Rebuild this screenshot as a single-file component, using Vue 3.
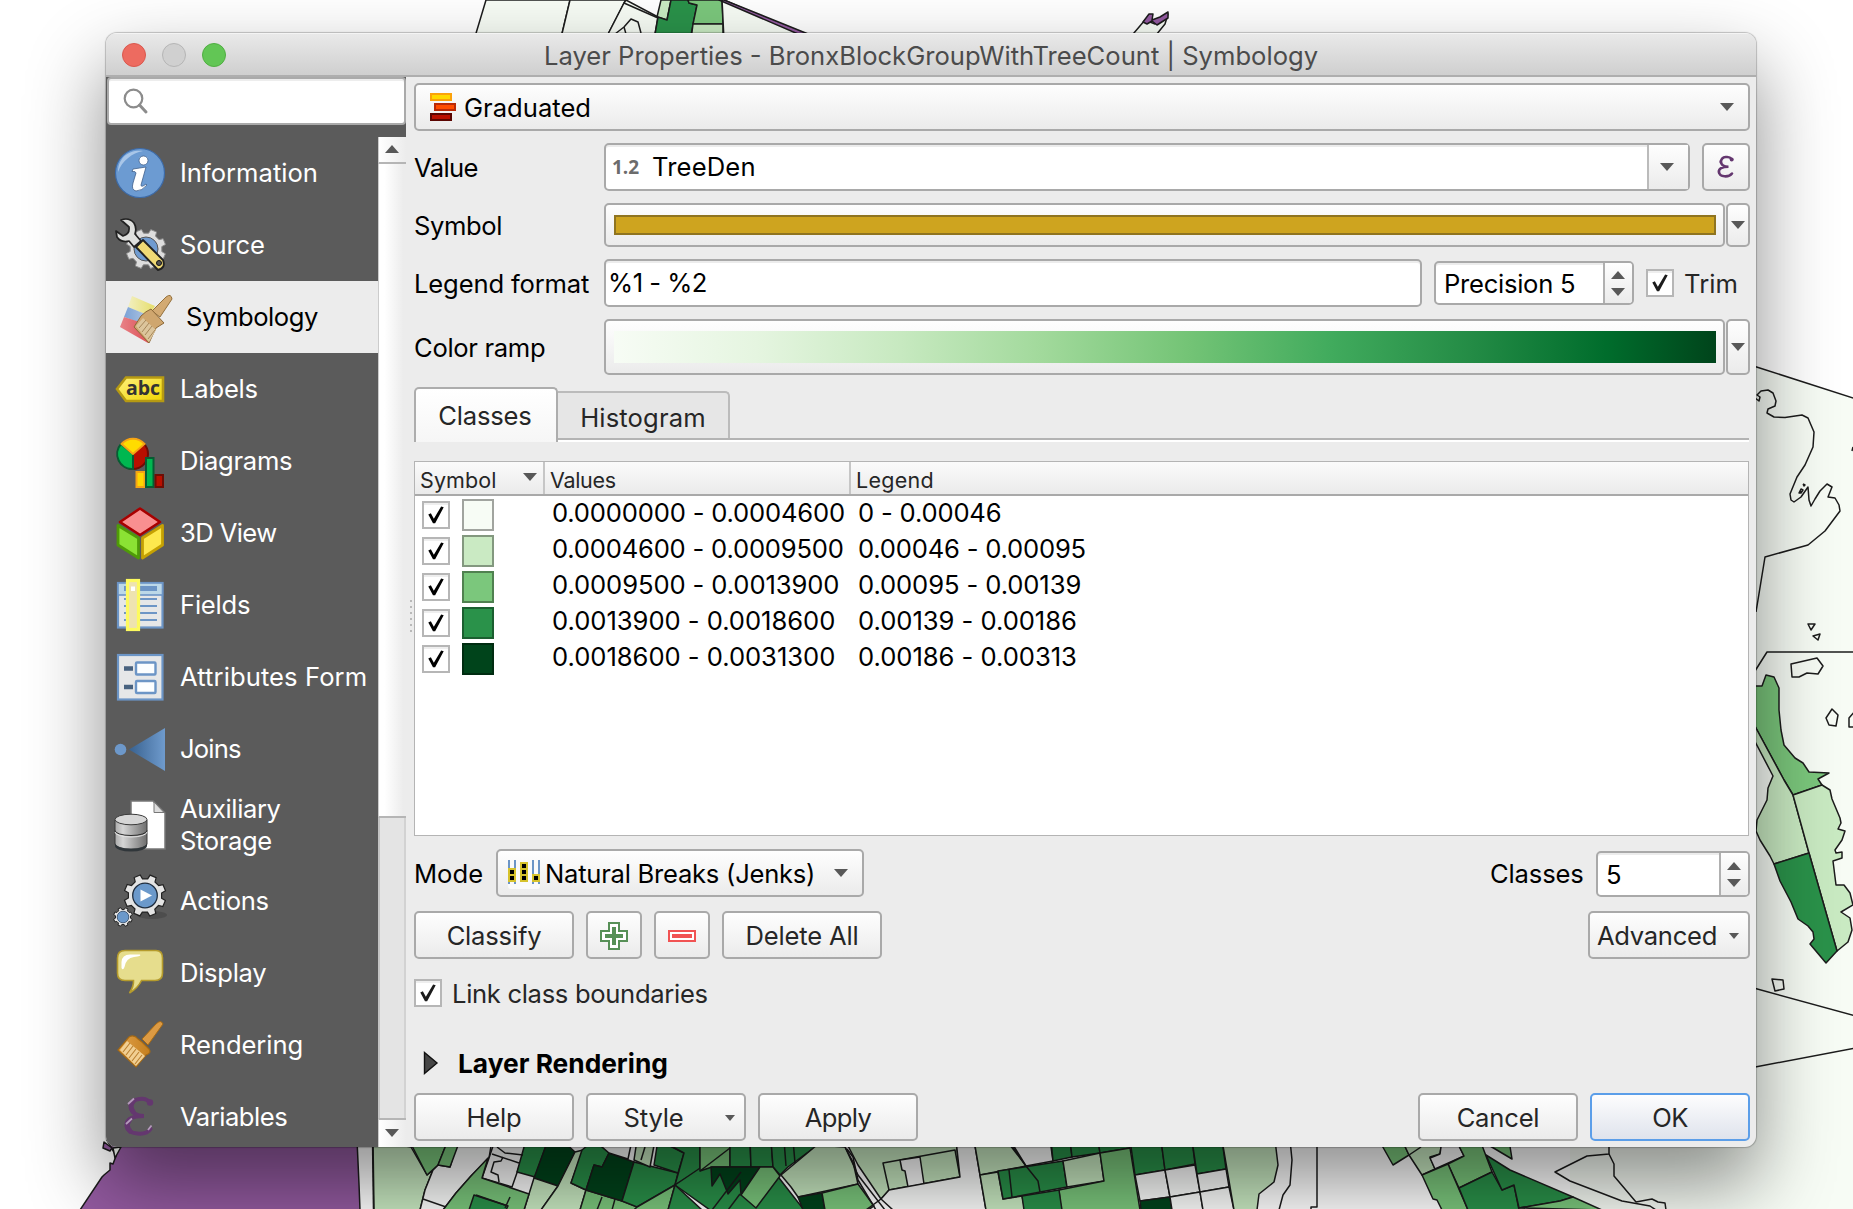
<script setup>
const nav = [
  { label: 'Information', icon: 'info', ls: 0 },
  { label: 'Source', icon: 'source', ls: -0.15 },
  { label: 'Symbology', icon: 'symbology', ls: -0.44, active: true },
  { label: 'Labels', icon: 'labels', ls: -0.21 },
  { label: 'Diagrams', icon: 'diagrams', ls: -0.31 },
  { label: '3D View', icon: 'view3d', ls: -0.6 },
  { label: 'Fields', icon: 'fields', ls: -0.22 },
  { label: 'Attributes Form', icon: 'form', ls: 0.08 },
  { label: 'Joins', icon: 'joins', ls: -0.8 },
  { label: 'Auxiliary Storage', icon: 'aux', ls: -0.4, tall: true },
  { label: 'Actions', icon: 'actions', ls: -0.3 },
  { label: 'Display', icon: 'display', ls: -0.29 },
  { label: 'Rendering', icon: 'rendering', ls: -0.08 },
  { label: 'Variables', icon: 'variables', ls: -0.5 },
]

const rows = [
  { color: '#f7fcf5', values: '0.0000000 - 0.0004600', legend: '0 - 0.00046', ls: -0.18 },
  { color: '#caeac3', values: '0.0004600 - 0.0009500', legend: '0.00046 - 0.00095', ls: -0.2 },
  { color: '#7bc77c', values: '0.0009500 - 0.0013900', legend: '0.00095 - 0.00139', ls: -0.1 },
  { color: '#2a924a', values: '0.0013900 - 0.0018600', legend: '0.00139 - 0.00186', ls: -0.03 },
  { color: '#00441b', values: '0.0018600 - 0.0031300', legend: '0.00186 - 0.00313', ls: -0.03 },
]

const P = '#f7fcf5', L = '#c9eac2', M = '#7bc77c', D = '#2a924a', X = '#00441b', V = '#935aa0', W = '#fcfdfc'

// Map features: [fill, points]
const areas = [
  [P, '486,0 474,40 560.500,40 570,0'],
  [P, '570,0 560.500,40 605,40 624,3 626,0'],
  [P, '626,0 624,3 605,40 654,40 658,17'],
  [L, '661,0 657,17 667,20 671,0'],
  [D, '671,0 667,20 658,17 654,40 690,40 697,5 689,3 688,0'],
  [M, '688,0 689,3 697,5 693,24 723,24 722,0'],
  [L, '693,24 723,24 723,40 691,40'],
  [P, '722,-1 724,40 815,40'],
  [V, '719,0 724,0 823,40 812,40'],
  [P, '1128,40 1145,20 1155,24 1168,14 1165,24 1152,40'],
  [V, '1143,22 1149,14 1153,14 1152,20 1160,17 1168,12 1168,18 1157,25 1152,21 1147,24'],
  [P, '1755,366 1856,399 1856,1215 1570,1215 1570,1140 1755,1080', 'none'],
  [M, '1750,686 1762,686 1766,675 1774,677 1779,688 1779,710 1781,730 1784,745 1795,758 1803,763 1809,772 1829,773 1818,779 1822,785 1793,795 1784,780 1750,717'],
  [L, '1750,717 1784,780 1793,795 1809,853 1774,864 1770,856 1760,840 1756,831 1757,820 1767,800 1768,788 1773,776 1750,732'],
  [L, '1793,795 1822,785 1830,790 1832,799 1840,818 1841,823 1838,829 1845,831 1842,840 1835,850 1836,853 1842,852 1842,858 1833,861 1836,885 1844,885 1850,893 1853,905 1841,912 1850,918 1852,930 1848,942 1837,951 1809,853'],
  [D, '1774,864 1809,853 1837,951 1826,963 1810,944 1814,939 1813,932 1808,926 1798,919 1791,902 1780,881'],
  [P, '1772,979 1783,980 1784,989 1775,991'],
  [P, '1808,624 1815,624 1811,630'],
  [P, '1813,636 1820,634 1818,640'],
  [P, '1791,664 1817,658 1823,666 1818,674 1807,673 1799,677 1792,677'],
  [P, '1826,718 1832,709 1838,715 1836,726 1829,725'],
  [P, '1856,710 1849,718 1849,727 1856,727'],
  [V, '107,1140 116,1156 113,1164 110,1163 110,1170 104,1175 102,1177 80,1210 360,1210 359,1184 357,1140'],
  [P, '113,1148 121,1147 115,1158'],
  [V, '104,1142 112,1148 110,1151 103,1148'],
  [L, '373,1140 411,1147 427,1175 433,1170 425,1190 420,1210 374,1210'],
  [W, '458,1140 492,1140 489,1158 471,1176 456,1193 443,1210 420,1210 425,1190 433,1170 438,1165 450,1167'],
  [M, '409,1140 427,1175 438,1165 448,1140'],
  [M, '448,1140 438,1165 450,1167 460,1140'],
  [W, '495,1140 489,1158 482,1178 512,1187 526,1147'],
  [D, '526,1140 517,1172 535,1177 548,1140'],
  [X, '548,1140 534,1178 558,1186 575,1152 562,1140'],
  [L, '534,1178 524,1210 541,1210 558,1186'],
  [M, '488,1158 482,1178 529,1194 524,1210 443,1210 456,1193 471,1176'],
  [D, '474,1195 508,1206 506,1210 469,1210'],
  [L, '541,1210 558,1186 575,1152 583,1150 571,1183 586,1190 580,1210'],
  [D, '594,1140 582,1150 571,1183 586,1190 594,1165 602,1167 609,1153'],
  [M, '586,1190 622,1201 638,1207 634,1210 580,1210'],
  [X, '609,1153 634,1162 622,1201 586,1190 594,1165 602,1167'],
  [D, '634,1162 678,1173 675,1185 637,1207 622,1201'],
  [W, '594,1140 632,1140 628,1159 609,1153'],
  [L, '637,1140 655,1140 650,1167 634,1160'],
  [D, '658,1140 684,1153 678,1173 654,1165'],
  [D, '660,1140 700,1140 700,1170 675,1185 684,1153'],
  [D, '675,1185 712,1160 765,1160 804,1210 710,1210'],
  [M, '675,1185 637,1207 634,1210 668,1210'],
  [D, '675,1185 668,1210 702,1210'],
  [M, '700,1140 730,1140 730,1167 712,1167 700,1171'],
  [D, '730,1140 750,1140 751,1167 730,1167'],
  [D, '750,1140 771,1140 773,1167 751,1167'],
  [D, '771,1140 818,1140 815,1147 788,1167 780,1175 773,1167'],
  [X, '711,1167 760,1167 741,1195 740,1180 728,1194 720,1174 712,1186'],
  [M, '760,1167 773,1167 780,1176 756,1208 741,1195'],
  [L, '817,1145 845,1147 853,1162 858,1184 798,1197 791,1187 781,1175'],
  [X, '798,1197 822,1193 825,1210 803,1210'],
  [M, '822,1193 858,1184 874,1206 868,1210 825,1210'],
  [L, '845,1140 956,1140 960,1177 889,1190 881,1199 858,1165'],
  [L, '883,1163 955,1150 960,1177 889,1190'],
  [W, '900,1160 920,1157 924,1184 908,1187 905,1171 902,1170'],
  [W, '956,1140 974,1140 986,1210 893,1210 881,1199 889,1190 960,1177'],
  [L, '974,1140 1008,1140 1026,1166 980,1175'],
  [W, '1010,1140 1050,1140 1053,1161 1026,1166'],
  [L, '980,1175 998,1172 1003,1199 1022,1196 1025,1210 986,1210'],
  [D, '998,1171 1063,1161 1067,1187 1003,1199'],
  [D, '1051,1140 1070,1140 1072,1157 1053,1161'],
  [D, '1070,1140 1098,1140 1100,1153 1072,1157'],
  [D, '1098,1140 1130,1140 1130,1148 1100,1153'],
  [L, '1063,1161 1100,1153 1104,1181 1067,1187'],
  [M, '1100,1153 1130,1148 1140,1210 1061,1210 1059,1190 1104,1181'],
  [D, '1022,1196 1059,1190 1062,1210 1024,1210'],
  [D, '1130,1140 1161,1140 1165,1170 1135,1175'],
  [D, '1161,1140 1192,1140 1195,1164 1165,1170'],
  [D, '1192,1140 1222,1140 1226,1169 1197,1174'],
  [W, '1135,1175 1165,1170 1170,1197 1140,1201'],
  [W, '1165,1170 1195,1165 1200,1192 1170,1197'],
  [W, '1197,1174 1226,1169 1229,1187 1200,1192'],
  [X, '1140,1201 1170,1197 1172,1210 1141,1210'],
  [W, '1170,1197 1200,1192 1203,1210 1172,1210'],
  [W, '1200,1192 1229,1187 1234,1210 1203,1210'],
  [L, '1222,1140 1275,1140 1278,1165 1274,1182 1259,1194 1257,1210 1234,1210'],
  [M, '1380,1142 1393,1165 1409,1155 1402,1140'],
  [L, '1402,1140 1409,1155 1422,1175 1435,1169 1430,1157 1440,1154 1442,1140'],
  [W, '1442,1140 1440,1154 1430,1158 1435,1169 1464,1156 1456,1140'],
  [M, '1456,1140 1480,1140 1492,1172 1459,1188 1448,1164 1464,1156'],
  [M, '1422,1175 1448,1164 1468,1210 1442,1210 1437,1200 1433,1199'],
  [D, '1459,1188 1492,1172 1502,1190 1514,1185 1519,1210 1468,1210'],
  [D, '1486,1155 1510,1170 1573,1197 1560,1201 1519,1208 1514,1185 1502,1190'],
  [M, '1519,1208 1560,1201 1573,1197 1602,1210'],
  [M, '1480,1140 1512,1159 1509,1140'],
]

// Open line work on top of the areas
const lines = [
  '1755,366.500 1856,399',
  '615,34 624,27 631,19 638,22 641,33', '624,27 626,34', '624,3 658,18',
  '1755,398 1759,401 1760,397 1757,395 1761,391 1768,390 1773,393 1776,401 1775,406 1768,409 1767,413 1774,417 1785,417.5 1802,415 1808,418 1814,432 1813,447 1805,465 1797,477 1790,494 1791,500 1794,502 1801,497 1808,487 1809,500 1811,506 1815,499 1820,491 1827,484 1832,487 1828,497 1835,498 1839,505 1840,511 1825,531 1808,545 1765,557 1756,612',
  '1799,493 1801,489 1803,490 1801,493 1799,493 1801,491', '1803,484 1805,485 1804,486 1803,484',
  '1852,451 1853,447', '1755,671 1767,652 1856,652',
  '1750,987 1856,1016', '1750,1068 1856,1048',
  '423,1199 446,1207', '492,1154 519,1163', '503,1157 501,1161 494,1162 491,1172 498,1175 499,1182',
  '497,1147 505,1153 523,1155', '476,1195 508,1206', '510,1197 505,1208',
  '602,1197 597,1210', '615,1199 612,1210', '645,1147 641,1160',
  '784,1140 786,1166', '793,1140 795,1163', '700,1171 730,1148',
  '712,1210 741,1172', '728,1210 740,1194',
  '847,1149 853,1157 858,1180 876,1210', '845,1147 858,1175 885,1210', '881,1199 866,1210',
  '1009,1170 1012,1197', '1010,1145 1026,1166 1038,1181 1040,1192',
  '1290,1140 1292,1160 1290,1185 1283,1195 1279,1210', '1317,1140 1317,1207 1311,1207 1311,1210',
  '1602,1210 1640,1226',
  '1609,1140 1609,1154 1587,1156 1573,1163 1555,1172 1570,1181 1622,1201 1650,1206 1656,1210',
  '1609,1154 1614,1164 1614,1176 1636,1202 1652,1199 1658,1202 1665,1203 1666,1210',
  '1409,1155 1421,1147', '372.5,1140 373.5,1210',
]
const gear = (cx, cy, r, n) => {
  const pts = []
  for (let i = 0; i < n; i++) {
    for (const [o, k] of [[-0.3, 0.8], [-0.2, 1], [0.2, 1], [0.3, 0.8]]) {
      const a = ((i + o) / n) * Math.PI * 2 + 0.4
      pts.push(`${(cx + Math.cos(a) * r * k).toFixed(1)},${(cy + Math.sin(a) * r * k).toFixed(1)}`)
    }
  }
  return pts.join(' ')
}
const bigGear = gear(31, 23.5, 21, 8)
const smallGear = gear(8, 45, 9.5, 8)
const sourceGear = gear(26, 27, 20, 8)
const tick = 'M5 13.5 L8 12 L11.5 18.5 L20 4 L23 5 L13 23.5 L10.5 23.5 Z'
</script>

<template>
  <div class="desktop">
    <svg class="map" viewBox="0 0 1853 1209" width="1853" height="1209">
      <polygon v-for="(a, i) in areas" :key="'a' + i" :fill="a[0]" :stroke="a[2]" :points="a[1]" />
      <polyline v-for="(l, i) in lines" :key="'l' + i" fill="none" :points="l" />
    </svg>

    <div class="window">
      <header class="titlebar">
        <div class="lights"><i class="red"></i><i class="off"></i><i class="green"></i></div>
        <h1>Layer Properties - BronxBlockGroupWithTreeCount | Symbology</h1>
      </header>

      <div class="body">
        <aside class="sidebar">
          <div class="search">
            <svg width="26" height="30" viewBox="0 0 26 30"><circle cx="10.500" cy="11.500" r="8.800" /><path d="M16.500 18 L23 25" /></svg>
          </div>
          <div class="list">
            <nav>
              <div v-for="n in nav" :key="n.label" class="item" :class="{ active: n.active, tall: n.tall }">
                <svg class="icon" width="56" height="56" viewBox="0 0 56 56">
                  <defs>
                    <linearGradient id="gJoin"><stop offset="0" stop-color="#38618f" /><stop offset="1" stop-color="#6f9bcd" /></linearGradient>
                    <linearGradient id="gCyl"><stop offset="0" stop-color="#aaa" /><stop offset=".25" stop-color="#d5d5d5" /><stop offset="1" stop-color="#6e6e6e" /></linearGradient>
                    <linearGradient id="gTag" x2="1" y2="1"><stop offset="0" stop-color="#fff17e" /><stop offset="1" stop-color="#efd400" /></linearGradient>
                    <linearGradient id="gWood"><stop offset="0" stop-color="#e0a04a" /><stop offset="1" stop-color="#c57f1d" /></linearGradient>
                    <linearGradient id="gY"><stop offset="0" stop-color="#f2efc0" /><stop offset="1" stop-color="#e6de6a" /></linearGradient>
                    <linearGradient id="gB"><stop offset="0" stop-color="#7ba2d6" /><stop offset="1" stop-color="#b4c8e2" /></linearGradient>
                    <linearGradient id="gR"><stop offset="0" stop-color="#e88388" /><stop offset="1" stop-color="#dd4f55" /></linearGradient>
                  </defs>
                  <template v-if="n.icon === 'info'">
                    <circle cx="28" cy="28" r="24.500" fill="#6c9bd2" stroke="#3d6ba8" stroke-width="1.200" />
                    <path d="M6 27 C6 12 18 4 31 6 C20 8 10 16 6 27Z" fill="#a9c6e8" />
                    <circle cx="31.500" cy="15.500" r="4.500" fill="#fff" stroke="#3f5f8c" stroke-width=".8" />
                    <path d="M21 24 Q28 23 34 22 L29 40 Q29 43 34 39 L35 40 Q30 46 24 46 Q19 45 21 38 L24 28 Q24 26 20 26.500Z" fill="#fff" stroke="#3f5f8c" stroke-width=".8" />
                  </template>
                  <template v-else-if="n.icon === 'source'">
                    <g transform="translate(8 5)">
                      <polygon :points="sourceGear" fill="#ddd" stroke="#8a8a8a" />
                      <circle cx="26" cy="27" r="12" fill="#6f9bd0" stroke="#555" />
                    </g>
                    <path d="M9 3 Q17 0 22 6 Q25 11 23 17 L29 24 L22 30 L17 24 Q9 26 5 20 L4 14 L11 19 Q18 17 17 10 Z" fill="#dedfdd" stroke="#222" stroke-width="1.700" stroke-linejoin="round" />
                    <path d="M24 30 L31 23 L51 43 Q54 51 46 53 Z" fill="#f0da75" stroke="#222" stroke-width="1.900" stroke-linejoin="round" />
                    <circle cx="47" cy="46" r="2.500" fill="#555" stroke="#111" />
                  </template>
                  <template v-else-if="n.icon === 'symbology'">
                    <path d="M12 7 L35 17 L29 27 L8 18Z" fill="url(#gY)" /><path d="M8 18 L30 27 L26 36 L4 28Z" fill="url(#gB)" /><path d="M4 28 L29 36 L28 54 L0 38Z" fill="url(#gR)" />
                    <path d="M32 22 L46 8 Q51 4 52 10 L40 28Z" fill="#d3aa72" stroke="#94703c" />
                    <path d="M21 27 Q26 22 31 20 L44 34 L36 39 L29 54 L14 38Z" fill="#cfa66e" stroke="#8c6838" />
                    <path d="M16 37 L23 29 L36 41 L29 53Z" fill="#dcc59c" /><path d="M19 39 L26 31 M22 43 L29 34 M25 46 L32 37 M28 50 L35 41" stroke="#a6875a" />
                  </template>
                  <template v-else-if="n.icon === 'labels'">
                    <path d="M5 28 L14 16.500 H51 V40 H14Z" fill="url(#gTag)" stroke="#b69a13" stroke-width="2.600" />
                    <text x="14" y="34" class="abc">abc</text>
                  </template>
                  <template v-else-if="n.icon === 'diagrams'">
                    <circle cx="21" cy="21" r="15" fill="#b90f00" stroke="#6e0d05" stroke-width="2" />
                    <path d="M21 21 V36 A15 15 0 0 1 9 11Z" fill="#00b750" stroke="#075c33" stroke-width="2" />
                    <path d="M21 21 L9.500 11 A15 15 0 0 1 32.500 11Z" fill="#ffdc00" stroke="#f5a415" stroke-width="2" />
                    <rect x="24.500" y="39" width="8" height="15" fill="#ffd700" stroke="#f5a415" stroke-width="2" />
                    <rect x="34" y="25" width="7.500" height="29" fill="#00b750" stroke="#075c33" stroke-width="2" />
                    <rect x="43.500" y="42" width="7.500" height="12" fill="#b90f00" stroke="#6e0d05" stroke-width="2" />
                  </template>
                  <template v-else-if="n.icon === 'view3d'">
                    <path d="M28 3.500 L48 17 L28 30 L8 17Z" fill="#f98f90" stroke="#a80000" stroke-width="2.600" stroke-linejoin="round" />
                    <path d="M6 20.500 L26.500 33 V53 L6 40Z" fill="#8be234" stroke="#4f9b08" stroke-width="2.800" stroke-linejoin="round" />
                    <path d="M50.500 20.500 L30.500 33 V53 L50.500 40Z" fill="#fde84e" stroke="#c5a103" stroke-width="2.800" stroke-linejoin="round" />
                  </template>
                  <template v-else-if="n.icon === 'fields'">
                    <rect x="6" y="6" width="44.500" height="44.500" fill="#e6e7e8" stroke="#6c95c6" stroke-width="2.200" />
                    <rect x="6" y="6" width="44.500" height="12" fill="#bcd8e8" stroke="#6c95c6" stroke-width="1.600" />
                    <path d="M12 11.500 H45" stroke="#6c95c6" stroke-width="5" />
                    <path d="M12 22 H45 M12 29 H45 M12 36 H45 M12 43 H45" stroke="#6c95c6" stroke-width="2.200" />
                    <rect x="15.500" y="3.500" width="11" height="49" fill="#eee3b0" stroke="#fdfa5e" stroke-width="3.200" />
                    <rect x="19" y="9.500" width="4" height="4.500" fill="#fff" />
                  </template>
                  <template v-else-if="n.icon === 'form'">
                    <rect x="6" y="6" width="44.500" height="44.500" fill="#e6e7e8" stroke="#6c95c6" stroke-width="2.200" />
                    <path d="M12 19.500 H21 M12 38 H21" stroke="#48627f" stroke-width="4.400" />
                    <rect x="24" y="13.500" width="19.500" height="12" rx="1" fill="#fcfeff" stroke="#6c95c6" stroke-width="2.400" />
                    <rect x="24" y="32" width="19.500" height="12" rx="1" fill="#fcfeff" stroke="#6c95c6" stroke-width="2.400" />
                  </template>
                  <template v-else-if="n.icon === 'joins'">
                    <circle cx="8.500" cy="28.500" r="5.800" fill="#6d98ca" /><path d="M17 28.500 L53 7 V50Z" fill="url(#gJoin)" />
                  </template>
                  <template v-else-if="n.icon === 'aux'">
                    <path d="M19 4 H41 L53 16 V52 H19Z" fill="#fff" stroke="#777" stroke-width="1.500" /><path d="M42 5 V15.500 H52Z" fill="#ddd" stroke="#777" />
                    <path d="M3 23 V47 A16 5.500 0 0 0 35 47 V23Z" fill="url(#gCyl)" stroke="#3b3b3b" />
                    <path d="M3 46 A16 5.500 0 0 0 35 46 V49 A16 5.500 0 0 1 3 49Z" fill="#30363a" />
                    <ellipse cx="19" cy="22.500" rx="16" ry="5.300" fill="#d6d6d6" stroke="#3b3b3b" />
                    <path d="M3 33.500 A16 5 0 0 0 35 33.500" fill="none" stroke="#2d2d2d" /><path d="M3 35 A16 5 0 0 0 35 35" fill="none" stroke="#e5e5e5" />
                  </template>
                  <template v-else-if="n.icon === 'actions'">
                    <ellipse cx="40" cy="42" rx="15" ry="4" fill="#444" opacity=".6" />
                    <polygon :points="bigGear" transform="translate(2 -1)" fill="#e4e4e4" stroke="#222" stroke-width="1.200" />
                    <circle cx="33" cy="22.500" r="12.300" fill="#6b99cb" stroke="#1f2d3e" stroke-width="1.300" /><path d="M28.500 16.500 L40 22.500 L28.500 28.500Z" fill="#fff" />
                    <polygon :points="smallGear" transform="translate(3 -1)" fill="#e4e4e4" stroke="#222" stroke-width="1" />
                    <circle cx="11" cy="44" r="5.800" fill="#6b99cb" stroke="#2c4666" stroke-width=".8" />
                  </template>
                  <template v-else-if="n.icon === 'display'">
                    <path d="M13 5.500 H44 Q50.500 5.500 50.500 13 V28 Q50.500 35.500 43 35.500 H29.500 Q26 43 17.500 48 Q22 41 21.500 35.500 H13 Q5.500 35.500 5.500 28 V13 Q5.500 5.500 13 5.500Z" fill="#e6dd8d" stroke="#b59b2c" stroke-width="1.600" />
                    <path d="M9.500 23 V17 Q10 9.500 18 9.500 H28 Q30 11 22 12 Q14 13 12.500 22 Q11 26 9.500 23Z" fill="#fff" />
                  </template>
                  <template v-else-if="n.icon === 'rendering'">
                    <path d="M30 22 L44 7 Q49 2 51 7 L36 28Z" fill="#dc9a43" stroke="#a66a14" />
                    <path d="M17 20 Q22 17 26 22 L30 25 L37 32 Q40 36 34 38 L24 50 L6 33Z" fill="url(#gWood)" stroke="#a66a14" stroke-width="1.200" />
                    <path d="M8 33 L15 24 L33 39 L24 49Z" fill="#f1cf92" />
                    <path d="M11 35 L18 26 M14 38 L21 29 M17 41 L24 32 M20 44 L27 35 M23 47 L30 38" stroke="#b97f30" stroke-width="1.100" />
                  </template>
                  <template v-else>
                    <path d="M37.500 13.500 C34 8 20 8.500 19 17 C18.500 23 24 27 32 27 C20 27 14 30.500 14.500 37 C16 46 34 47 38.500 40" fill="none" stroke="#64376f" stroke-width="4" stroke-linecap="round" />
                    <path d="M21 12.500 Q17 17 21 22.500 M17.500 31 Q13 37 18 42" fill="none" stroke="#64376f" stroke-width="5" stroke-linecap="round" />
                    <circle cx="38" cy="13.500" r="3.200" fill="#64376f" /><path d="M16 15 L22 9.500 M14 35 L20 29.500 M36 41 L39.500 36.500" stroke="#b49abb" stroke-width="1.800" />
                  </template>
                </svg>
                <span class="label" :style="{ letterSpacing: n.ls + 'px' }">{{ n.label }}</span>
              </div>
            </nav>
            <div class="scrollbar">
              <div class="sb-btn"><i class="tri up"></i></div>
              <div class="thumb"></div>
              <div class="trough"></div>
              <div class="sb-btn bottom"><i class="tri"></i></div>
            </div>
          </div>
        </aside>

        <main>
          <div class="grip"><i v-for="k in 6" :key="k"></i></div>
          <div class="box combo renderer">
            <svg width="28" height="36" viewBox="0 0 28 36">
              <rect x="1" y="5" width="20" height="6" fill="#ffd800" stroke="#fba20a" stroke-width="2" />
              <rect x="5" y="15" width="20" height="6" fill="#ff4d00" stroke="#b92a08" stroke-width="2" />
              <rect x="1" y="25" width="20" height="6" fill="#b90f00" stroke="#5b0602" stroke-width="2" />
            </svg>
            <span>Graduated</span><i class="tri"></i>
          </div>

          <div class="row value">
            <label class="t6">Value</label>
            <div class="box field combo-edit">
              <span class="type">1.2</span><span class="wide">TreeDen</span>
              <div class="drop"><i class="tri"></i></div>
            </div>
            <div class="box eps">
              <svg width="24" height="28" viewBox="0 0 24 28"><path d="M18.500 6 C16.500 3 8.500 3 8 8.500 C8 12 11 13.800 15.500 13.800 C9 13.800 5.500 15.800 6 19 C6.500 24.500 16 24.500 19 20.500" fill="none" stroke="#64376f" stroke-width="2.600" stroke-linecap="round" /><path d="M7.500 8 V9.500 M5.800 18 V20" stroke="#64376f" stroke-width="2" stroke-linecap="round" /><circle cx="18.700" cy="6.500" r="2" fill="#64376f" /></svg>
            </div>
          </div>

          <div class="row symbol">
            <label class="t4">Symbol</label>
            <div class="box fill"><div class="gold"></div></div>
            <div class="box side"><i class="tri"></i></div>
          </div>

          <div class="row format">
            <label>Legend format</label>
            <div class="box field pattern t5">%1 - %2</div>
            <div class="box field spin precision"><span>Precision 5</span><div class="arrows"><i class="tri up"></i><i class="tri"></i></div></div>
            <div class="check big"><svg width="24" height="24" viewBox="0 0 28 28"><path :d="tick" /></svg></div>
            <span class="soft trim">Trim</span>
          </div>

          <div class="row ramp">
            <label class="t3">Color ramp</label>
            <div class="box fill"><div class="greens"></div></div>
            <div class="box side"><i class="tri"></i></div>
          </div>

          <div class="tabs">
            <div class="tab on">Classes</div>
            <div class="tab off wide">Histogram</div>
          </div>

          <div class="table">
            <div class="thead">
              <div class="c1 hsym">Symbol<i class="tri"></i></div>
              <div class="c2 hval">Values</div>
              <div class="c3 hleg">Legend</div>
            </div>
            <div v-for="r in rows" :key="r.values" class="trow" :style="{ letterSpacing: r.ls + 'px' }">
              <div class="c1">
                <div class="check"><svg width="24" height="24" viewBox="0 0 28 28"><path :d="tick" /></svg></div>
                <div class="swatch" :style="{ background: r.color }"></div>
              </div>
              <div class="c2">{{ r.values }}</div>
              <div class="c3">{{ r.legend }}</div>
            </div>
          </div>

          <div class="row mode">
            <label class="modelabel">Mode</label>
            <div class="box combo jenks">
              <svg width="36" height="36" viewBox="0 0 36 36">
                <rect x="2" y="5" width="32" height="29" rx="3" fill="#fafafa" />
                <path d="M3 5 V29 M9 5 V29 M27 5 V29 M33 5 V29" stroke="#6c95c6" stroke-width="2" />
                <rect x="2" y="13" width="8" height="14" fill="#d6c22c" /><rect x="14" y="7" width="8" height="20" fill="#d6c22c" /><rect x="26" y="19" width="8" height="8" fill="#d6c22c" />
                <path d="M4 15 h4 v4 h-4z M4 21 h4 v4 h-4z M16 9 h4 v4 h-4z M16 15 h4 v4 h-4z M16 21 h4 v4 h-4z M28 21 h4 v4 h-4z" fill="#000" />
              </svg>
              <span>Natural Breaks (Jenks)</span><i class="tri"></i>
            </div>
            <label class="count">Classes</label>
            <div class="box field spin classes"><span>5</span><div class="arrows"><i class="tri up"></i><i class="tri"></i></div></div>
          </div>

          <div class="row actions">
            <button class="box w160">Classify</button>
            <button class="box sq">
              <svg width="28" height="28" viewBox="0 0 28 28"><path d="M9 1 H19 V9 H27 V19 H19 V27 H9 V19 H1 V9 H9Z" fill="#fff" stroke="#579057" stroke-width="2" /><path d="M14 5 V23 M5 14 H23" stroke="#579057" stroke-width="4" /></svg>
            </button>
            <button class="box sq">
              <svg width="28" height="28" viewBox="0 0 28 28"><rect x="1" y="9" width="26" height="10" fill="#fff" stroke="#f15353" stroke-width="2" /><rect x="4" y="12" width="20" height="4" fill="#f15353" /></svg>
            </button>
            <button class="box w160">Delete All</button>
            <button class="box advanced">Advanced<i class="tri small"></i></button>
          </div>

          <div class="row link">
            <div class="check big"><svg width="24" height="24" viewBox="0 0 28 28"><path :d="tick" /></svg></div>
            <span class="soft t3">Link class boundaries</span>
          </div>

          <div class="row group">
            <svg width="16" height="24" viewBox="0 0 16 24"><path d="M1.500 1.500 L14 12 L1.500 22.500Z" fill="#464646" stroke="#111" stroke-width="1.400" /></svg>
            <b>Layer Rendering</b>
          </div>

          <div class="row footer">
            <button class="box w160">Help</button>
            <button class="box w160 style">Style<i class="tri small"></i></button>
            <button class="box w160 t6">Apply</button>
            <button class="box w160 cancel">Cancel</button>
            <button class="box w160 ok t6">OK</button>
          </div>
        </main>
      </div>
    </div>
  </div>
</template>

<style>
html, body { margin: 0; }
</style>

<style scoped>
* { box-sizing: border-box; }
.desktop {
  position: relative; width: 1853px; height: 1209px; overflow: hidden; background: #fff;
  padding: 33px 0 0 106px; font: 25.6px/32px Inter, "Liberation Sans", sans-serif; letter-spacing: -0.2px; color: #000; white-space: nowrap;
}
.map { position: absolute; left: 0; top: 0; stroke: #1c1c1c; stroke-width: 1.5; stroke-linejoin: round; }
.window {
  position: relative; width: 1650px; height: 1114px; border-radius: 11px; overflow: hidden; background: #ececec;
  display: flex; flex-direction: column;
  box-shadow: 0 0 1px 1px rgba(0, 0, 0, .22), 0 36px 76px 2px rgba(0, 0, 0, .44);
}
.titlebar { height: 44px; display: flex; align-items: center; background: linear-gradient(#e9e9e9, #cfcfcf); border-bottom: 2px solid #aeaeae; border-top: 1px solid #f4f4f4; }
.lights { display: flex; gap: 16px; margin-left: 16px; width: 422px; }
.lights i { width: 24px; height: 24px; border-radius: 50%; border-width: 1px; border-style: solid; }
.red { background: #ed6b60; border-color: #d9584e; }
.off { background: #d0d0d0; border-color: #b5b5b5; }
.green { background: #62c655; border-color: #50ae42; }
h1 { margin: 2px 0 0; font-size: 25.6px; font-weight: 400; letter-spacing: 0; color: #4b4b4b; }
.body { display: flex; flex: 1; min-height: 0; }

.sidebar { width: 300px; background: #5b5b5b; display: flex; flex-direction: column; }
.search { height: 48px; margin: 0 0 0 1px; background: #fff; border: 2px solid #aaa; border-radius: 4px; padding: 8px 0 0 14px; box-shadow: inset 0 2px 0 #ededed; }
.search svg { fill: none; stroke: #8c8c8c; stroke-width: 2.200; stroke-linecap: round; }
.search path { stroke-width: 3; }
.list { flex: 1; display: flex; min-height: 0; }
nav { width: 272px; padding-top: 12px; color: #fff; overflow: hidden; }
.item { height: 72px; display: flex; align-items: center; padding-left: 6px; gap: 12px; }
.item.tall { height: 80px; }
.item.tall .label { white-space: normal; width: 120px; }
.item.active { background: #ececec; color: #000; padding-left: 14px; gap: 10px; }
.icon { flex: none; }
.abc { font: bold 19.500px "Open Sans", "Noto Sans", sans-serif; letter-spacing: 0; fill: #333; }
.scrollbar { width: 28px; margin-top: 12px; display: flex; flex-direction: column; background: #e4e4e4; }
.sb-btn { height: 27px; display: flex; justify-content: center; align-items: center; padding: 0 2px 2px 0; background: linear-gradient(90deg, #fff, #ececec); border-bottom: 2px solid #b5b5b5; border-left: 1px solid #ccc; }
.sb-btn.bottom { height: 29px; border-bottom: 0; border-top: 2px solid #b5b5b5; }
.thumb { height: 654px; background: linear-gradient(90deg, #fff 20%, #ececec 90%); border-left: 1px solid #ccc; border-bottom: 2px solid #b5b5b5; }
.trough { flex: 1; border-left: 2px solid #c4c4c4; border-right: 2px solid #d2d2d2; }

.tri { flex: none; width: 0; height: 0; border: 7.500px solid transparent; border-top: 8px solid #585858; border-bottom: 0; }
.tri.up { border-top: 0; border-bottom: 8px solid #585858; }
.tri.small { border-width: 6px 5.500px 0; }

main { position: relative; flex: 1; padding: 6px 6px 0 8px; display: flex; flex-direction: column; }
.grip { position: absolute; left: 4px; top: 523px; display: flex; flex-direction: column; gap: 4px; }
.grip i { width: 2px; height: 2px; background: #b9b9b9; }
.box { background: linear-gradient(#fefefe, #ebebeb); border: 2px solid #a9a9a9; border-radius: 5px; }
.field { background: #fff; box-shadow: inset 0 2px 0 #ececec; }
.row { display: flex; margin-top: 12px; }
.row label { width: 190px; flex: none; align-self: center; padding-top: 2px; }
.t3 { letter-spacing: -0.320px; }
.t4 { letter-spacing: -0.400px; }
.t5 { letter-spacing: -0.500px; }
.t6 { letter-spacing: -0.650px; }
.wide { letter-spacing: 0.150px; }
.soft, button { color: #262626; }

.combo { display: flex; align-items: center; }
.renderer { height: 48px; padding: 0 14px; letter-spacing: 0; }
.renderer span { margin: 1px 0 0 6px; }
.renderer .tri, .jenks .tri { margin-left: auto; }
.combo-edit { width: 1086px; height: 48px; display: flex; align-items: center; }
.type { font: bold 19px "Open Sans", "Noto Sans", sans-serif; color: #6c6c6c; width: 46px; padding-left: 6px; letter-spacing: 0; }
.drop { margin-left: auto; width: 41px; height: 44px; padding-right: 3px; border-left: 2px solid #bbb; display: flex; align-items: center; justify-content: center; background: linear-gradient(#fefefe, #ebebeb); }
.eps { width: 48px; height: 48px; margin-left: 12px; display: flex; align-items: center; justify-content: center; }
.eps svg { margin-right: 2px; }
.fill { width: 1121px; padding: 10px 7px 10px 8px; }
.side { width: 24px; margin-left: 1px; display: flex; align-items: center; justify-content: center; }
.symbol .box { height: 44px; }
.gold { height: 20px; background: #cea41f; border: 2px solid #8f7420; }
.format { height: 48px; align-items: center; }
.format label { letter-spacing: -0.150px; }
.pattern { width: 818px; height: 48px; line-height: 43px; padding-left: 2px; }
.spin { display: flex; }
.spin span { flex: 1; align-self: center; letter-spacing: -0.270px; padding-top: 1px; }
.arrows { width: 29px; padding-right: 2px; border-left: 2px solid #b0b0b0; display: flex; flex-direction: column; align-items: center; justify-content: center; gap: 9px; background: linear-gradient(#fefefe, #ebebeb); border-radius: 0 3px 3px 0; }
.precision { width: 200px; height: 44px; margin: 0 12px; padding-left: 8px; }
.precision .arrows { margin-left: -2px; }
.check { width: 28px; height: 28px; background: #fff; border: 2px solid #b6b6b6; box-shadow: inset 0 2px 0 #eee; }
.check svg { display: block; fill: #000; }
.big svg { fill: #1c1c1c; }
.trim { margin-left: 10px; padding-top: 2px; letter-spacing: 0.100px; }
.ramp .box { height: 56px; }
.greens { height: 32px; background: linear-gradient(90deg, #f7fcf5, #e5f5e0 13%, #c7e9c0 26%, #a1d99b 39%, #74c476 52%, #41ab5d 65%, #238b45 78%, #006d2c 90%, #00441b); }

.tabs { display: flex; height: 55px; margin-top: 12px; align-items: flex-start; width: 1335px; background: linear-gradient(#b3b3b3, #b3b3b3) 0 51px / 100% 2px no-repeat, linear-gradient(#fff, #fff) 0 53px / 100% 2px no-repeat; }
.tab { text-align: center; border: 2px solid #adadad; border-bottom: 0; color: #262626; }
.tab.on { width: 144px; height: 55px; line-height: 53px; padding-right: 2px; background: linear-gradient(#fff, #f6f6f6); border-radius: 5px 5px 0 0; }
.tab.off { width: 172px; height: 47px; margin-top: 4px; line-height: 49px; background: #e6e6e6; border-left: 0; border-color: #bbb; border-radius: 0 5px 0 0; }

.table { width: 1335px; height: 375px; margin-top: 19px; background: #fff; border: 1px solid #b4b4b4; }
.thead { height: 34px; display: flex; margin-bottom: 3px; font-size: 21.500px; line-height: 36px; color: #262626; background: linear-gradient(#fbfbfb, #ebebeb); border-bottom: 2px solid #a9a9a9; }
.thead > div { height: 32px; }
.c1 { width: 130px; display: flex; align-items: flex-start; }
.thead .c1, .thead .c2 { border-right: 2px solid #c6c6c6; }
.hsym { padding-left: 5px; letter-spacing: 0.100px; }
.hsym .tri { margin: 11px 0 0 26px; }
.hval { padding-left: 5px; letter-spacing: -0.300px; }
.hleg { padding-left: 5px; letter-spacing: 0.300px; }
.c2 { width: 306px; }
.trow { height: 36px; display: flex; }
.trow .c1 { padding-left: 7px; }
.trow .check { margin-top: 2px; }
.trow .c2 { padding-left: 7px; }
.trow .c3 { padding-left: 7px; }
.trow .c2, .trow .c3 { line-height: 28px; }
.swatch { width: 32px; height: 32px; margin-left: 12px; border: 2px solid rgba(0, 0, 0, .35); }

.mode { height: 48px; margin-top: 13px; }
.mode label { width: 82px; }
.modelabel { letter-spacing: 0; }
.jenks { width: 368px; padding: 0 14px 0 8px; letter-spacing: -0.250px; }
.jenks svg { flex: none; }
.jenks span { margin: 1px 0 0 3px; }
.mode .count { margin-left: auto; width: 106px; letter-spacing: -0.150px; }
.classes { width: 154px; height: 46px; margin-top: 2px; padding-left: 8px; }
.actions { gap: 12px; margin-top: 14px; }
button { font: inherit; letter-spacing: inherit; height: 48px; padding: 1px 0 0; display: flex; align-items: center; justify-content: center; }
button.t6 { letter-spacing: -0.650px; }
.w160 { width: 160px; }
.sq { width: 56px; }
.advanced { width: 162px; margin-left: auto; padding-right: 2px; gap: 12px; letter-spacing: -0.290px; }
.link { margin-top: 20px; height: 28px; align-items: center; }
.link span { margin-left: 10px; padding-top: 1px; }
.group { margin-top: 42px; height: 28px; align-items: center; padding-left: 9px; }
.group b { margin: 2px 0 0 19px; letter-spacing: 0; font-size: 26.300px; }
.footer { gap: 12px; margin-top: 16px; }
.style { padding-left: 15px; gap: 42px; }
.style .tri { margin-right: -12px; }
.cancel { margin-left: auto; }
.ok { border-color: #5b9ee9; background: linear-gradient(#fdfdfe, #dfe3ec); }
</style>
